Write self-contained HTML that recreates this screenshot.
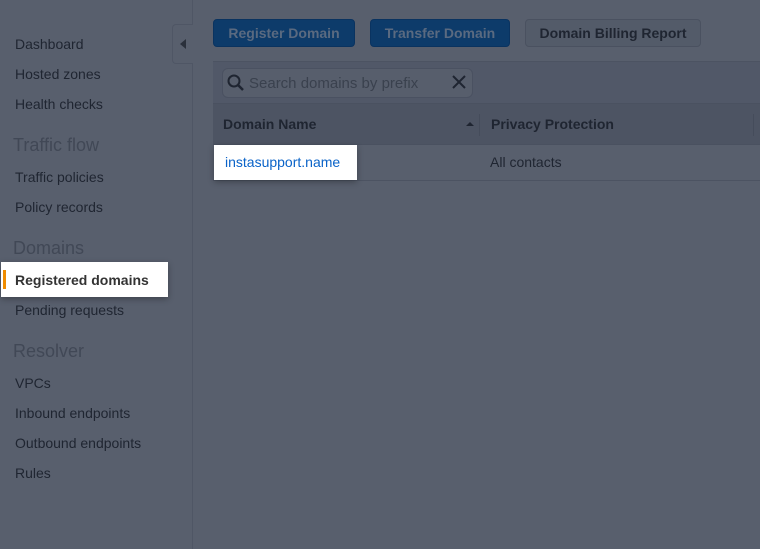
<!DOCTYPE html>
<html><head><style>
*{margin:0;padding:0;box-sizing:border-box}
body{width:760px;height:549px;background:#585f6d;font-family:"Liberation Sans",Arial,sans-serif;position:relative;overflow:hidden;color:#1c212b}
.side{position:absolute;left:0;top:0;width:193px;height:549px;border-right:1px solid #4f5665}
.it{position:absolute;left:15px;font-size:14px;color:#1f2531}
.hd{position:absolute;left:13px;font-size:18px;color:#414856}
.tog{position:absolute;left:172px;top:24px;width:21px;height:40px;border:1px solid #4f5665;border-right:none;border-radius:4px 0 0 4px;background:#585f6d}
.tog:after{content:"";position:absolute;left:7px;top:14px;border-right:6px solid #2a303b;border-top:5px solid transparent;border-bottom:5px solid transparent}
.btn{position:absolute;top:19px;height:28px;border-radius:4px;font-size:14px;font-weight:bold;line-height:26px;text-align:center}
.blue{background:#0d3b6a;color:#5a6a80;border:1px solid #0a3360}
.gray{background:#535b69;color:#1f2531;border:1px solid #4a5160}
.bar{position:absolute;left:213px;top:61px;width:547px;height:42px;background:#515868;border-top:1px solid #4c5362}
.search{position:absolute;left:222px;top:68px;width:251px;height:30px;border:1px solid #4a5161;border-radius:6px;background:#575e6c}
.th{position:absolute;left:213px;top:103px;width:547px;height:42px;background:#4d5463;border-top:1px solid #4a5160;border-bottom:1px solid #4a5160}
.row{position:absolute;left:213px;top:145px;width:547px;height:36px;border-bottom:1px solid #4c5362}
</style></head><body>
<div class="side">
<div class="it" style="top:36px">Dashboard</div>
<div class="it" style="top:66px">Hosted zones</div>
<div class="it" style="top:96px">Health checks</div>
<div class="hd" style="top:135px">Traffic flow</div>
<div class="it" style="top:169px">Traffic policies</div>
<div class="it" style="top:199px">Policy records</div>
<div class="hd" style="top:238px">Domains</div>
<div style="position:absolute;left:1px;top:262px;width:167px;height:35px;background:#fff;box-shadow:0 2px 6px rgba(0,0,0,.3)">
<div style="position:absolute;left:2px;top:8px;width:3px;height:19px;background:#f08c00"></div>
<div style="position:absolute;left:14px;top:10px;font-size:14px;font-weight:bold;color:#333">Registered domains</div></div>
<div class="it" style="top:302px">Pending requests</div>
<div class="hd" style="top:341px">Resolver</div>
<div class="it" style="top:375px">VPCs</div>
<div class="it" style="top:405px">Inbound endpoints</div>
<div class="it" style="top:435px">Outbound endpoints</div>
<div class="it" style="top:465px">Rules</div>
</div>
<div class="tog"></div>
<div class="btn blue" style="left:213px;width:142px">Register Domain</div>
<div class="btn blue" style="left:370px;width:140px">Transfer Domain</div>
<div class="btn gray" style="left:525px;width:176px">Domain Billing Report</div>
<div class="bar"></div>
<div class="search">
<svg width="20" height="20" style="position:absolute;left:3px;top:4px" viewBox="0 0 20 20"><circle cx="8" cy="8" r="5.5" fill="none" stroke="#1f2531" stroke-width="2"/><path d="M12 12l5 5" stroke="#1f2531" stroke-width="2.5"/></svg>
<span style="position:absolute;left:26px;top:6px;font-size:15px;color:#3a414e">Search domains by prefix</span>
<svg width="14" height="14" style="position:absolute;left:229px;top:6px" viewBox="0 0 14 14"><path d="M1 1l12 12M13 1L1 13" stroke="#1f2531" stroke-width="2"/></svg>
</div>
<div class="th">
<span style="position:absolute;left:10px;top:12px;font-size:14px;font-weight:bold;color:#1f2531">Domain Name</span>
<div style="position:absolute;left:253px;top:18px;border-bottom:4px solid #1f2531;border-left:4px solid transparent;border-right:4px solid transparent"></div>
<div style="position:absolute;left:266px;top:10px;width:1px;height:22px;background:#454c5b"></div>
<span style="position:absolute;left:278px;top:12px;font-size:14px;font-weight:bold;color:#1f2531">Privacy Protection</span>
<div style="position:absolute;left:540px;top:10px;width:1px;height:22px;background:#454c5b"></div>
</div>
<div class="row"><span style="position:absolute;left:277px;top:9px;font-size:14px;color:#1f2531">All contacts</span></div>
<div style="position:absolute;left:214px;top:145px;width:143px;height:35px;background:#fff;box-shadow:0 2px 6px rgba(0,0,0,.3)">
<span style="position:absolute;left:11px;top:9px;font-size:14px;color:#0a63c8">instasupport.name</span></div>
</body></html>
